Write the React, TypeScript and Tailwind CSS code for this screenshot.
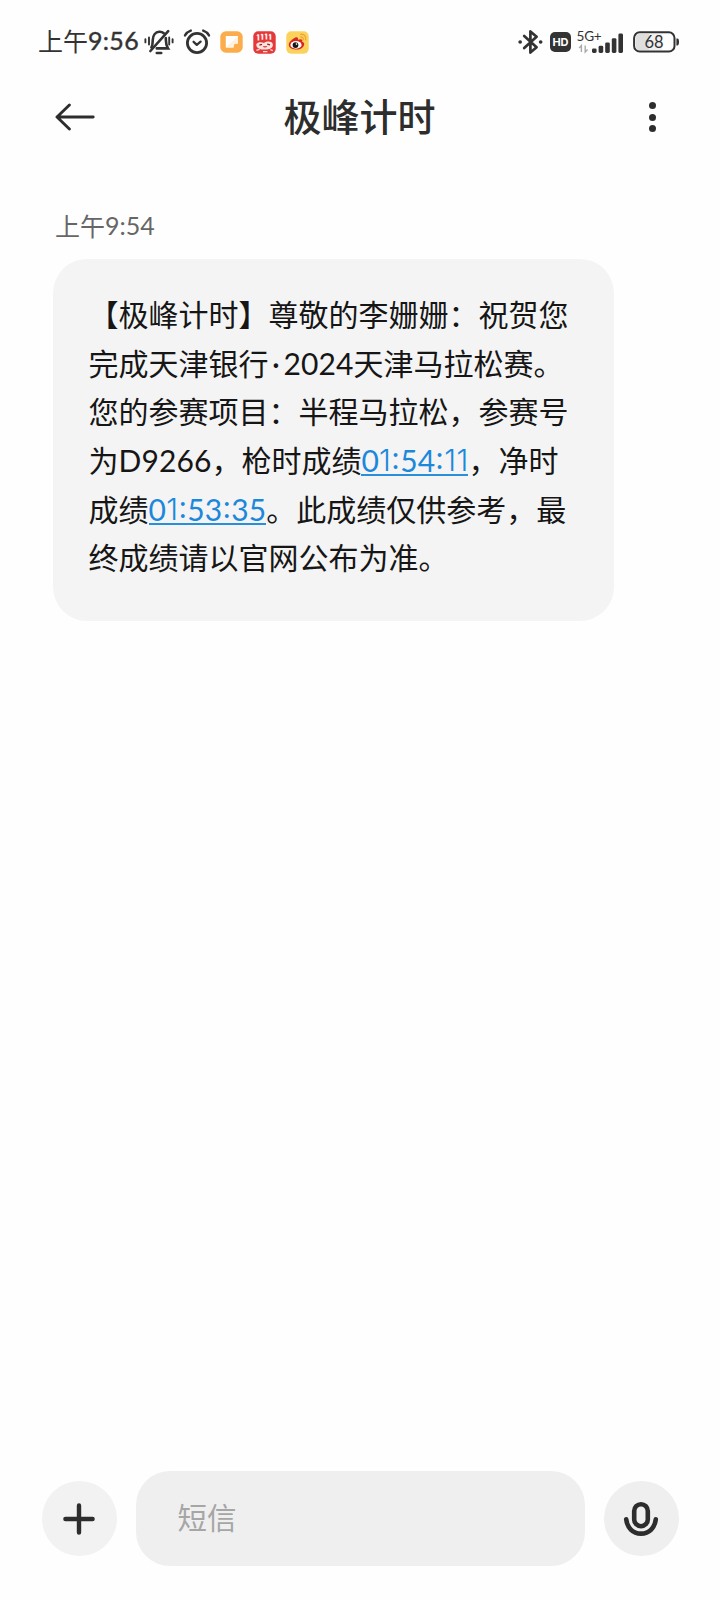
import type { ReactNode } from "react";

const cjk = "font-['Noto_Sans_CJK_SC',sans-serif]";
const latin = "font-['Lato','Noto_Sans_CJK_SC',sans-serif]";

const MutedBellIcon = () => (
    <svg width="30" height="26" viewBox="0 0 30 26" fill="none" stroke="#333" strokeWidth="2.6" strokeLinecap="round">
        <path d="M7.4 18.4C8.8 16.6 8.6 14.4 8.7 11.2C8.9 6.6 11.4 3 15.2 2.8C17 2.7 18.6 3.2 19.8 4.2" />
        <path d="M21.8 9C22 12.4 21.4 15.6 24 19.4H12.8" />
        <path d="M24.2 2.2L6.4 22" />
        <path d="M12.8 24H17.2" />
        <path d="M1.4 10.2V13.4M5 8.4V15.6M25.2 8.4V15.6M28.6 10.2V13.4" strokeWidth="1.9" />
    </svg>
);

const AlarmIcon = () => (
    <svg width="28" height="26" viewBox="0 0 28 26" fill="none" stroke="#333" strokeWidth="2.8" strokeLinecap="round" strokeLinejoin="round">
        <circle cx="14" cy="14" r="9.6" />
        <path d="M10.6 12.8L13.8 15.8L17.6 12.6" strokeWidth="2.3" />
        <path d="M2 6.4C3.4 4 5.4 2.4 7.8 1.6M26 6.4C24.6 4 22.6 2.4 20.2 1.6" strokeWidth="2.4" />
    </svg>
);

const NoteAppIcon = () => (
    <svg width="23" height="22" viewBox="0 0 23 22">
        <rect x="0.3" y="0.3" width="22.4" height="21.4" rx="5.5" fill="#fbad4b" />
        <path d="M5.8 5H18V12.4L14.4 12.8L13.4 16.6H5.8Z" fill="#fff" />
        <path d="M6 16.6L18 5V12.4L14.4 12.8L13.4 16.6Z" fill="#fff1dc" />
    </svg>
);

const SaleAppIcon = () => (
    <svg width="23" height="23" viewBox="0 0 23 23">
        <rect x="0.3" y="0.3" width="22.4" height="22.4" rx="5" fill="#e5383b" />
        <path d="M5.4 3.6V9.4M9.4 3V8.8M13.4 2.8V8.6M17.4 3.2V8.8" stroke="#ffe9e4" strokeWidth="1.7" />
        <path d="M3.8 4.8L5.4 3.6M7.8 4.2L9.4 3M11.8 4L13.4 2.8M15.8 4.4L17.4 3.2" stroke="#ffe9e4" strokeWidth="1.2" />
        <path d="M3.2 13.4C5 10.4 9 11.2 11 12C14 10 18.6 10 19.8 13C20.6 17 16.6 18.6 11.8 18.6C7 18.6 3.4 17.2 3.2 13.4Z" fill="#fbe3de" />
        <path d="M6.4 14.2L9 13.4M14.2 13.2L17 13.8" stroke="#8f2023" strokeWidth="1.3" />
        <path d="M9.6 15.2Q12 18 14.6 15.2Z" fill="#cf2228" />
        <path d="M3.4 19.4L6.6 18.4M10 20.6H14.4M17.4 18.6L19.8 19.6" stroke="#ffd9d4" strokeWidth="1.2" />
    </svg>
);

const WeiboAppIcon = () => (
    <svg width="23" height="23" viewBox="0 0 23 23">
        <rect x="0.3" y="0.3" width="22.4" height="22.4" rx="5" fill="#fbd35c" />
        <path d="M9 6.8C11 5.8 12.6 6.6 12 8.8C14.6 7.8 17 8.2 16.2 10.8C18.4 11.4 19 13.4 17.4 15.4C15.6 17.8 12.6 18.8 9.4 18.6C5.4 18.4 2.6 16.4 2.8 13.6C3 11.2 6.4 7.8 9 6.8Z" fill="#d9261f" />
        <ellipse cx="10" cy="13.9" rx="5.6" ry="3.8" fill="#fff" />
        <circle cx="9.5" cy="14.1" r="2.9" fill="#181818" />
        <circle cx="10.5" cy="13.1" r="0.8" fill="#fff" />
        <path d="M14.6 3.4C18 2.8 20.4 5.4 19.6 8.8M14.8 6C16.4 5.8 17.6 7 17.2 8.6" fill="none" stroke="#f0a53a" strokeWidth="1.4" strokeLinecap="round" />
    </svg>
);

const BluetoothIcon = () => (
    <svg width="25" height="26" viewBox="0 0 25 26" fill="none" stroke="#333" strokeWidth="2.7" strokeLinejoin="round" strokeLinecap="round">
        <path d="M6.2 7L18.6 18.2L12.4 23.6V2.4L18.6 7.8L6.2 19" />
        <path d="M2.1 13H2.2M22.6 13H22.7" strokeWidth="3.6" />
    </svg>
);

const SignalIcon = () => (
    <svg width="48" height="30" viewBox="-1 -3 48 30">
        <text x="-0.4" y="11.2" fontSize="13.6" fill="#333" fontFamily="Lato, sans-serif" textLength="25">5G+</text>
        <path d="M4.4 22V15.6L2.2 18M8.2 15.6V22L10.6 19.6" fill="none" stroke="#aaa" strokeWidth="1.4" />
        <g fill="#333">
            <rect x="15" y="18.4" width="4.6" height="4.6" rx="1.4" />
            <rect x="21.6" y="15.8" width="4.6" height="7.2" rx="1.4" />
            <rect x="28.2" y="12.4" width="4.6" height="10.6" rx="1.4" />
            <rect x="34.8" y="8.2" width="4.6" height="14.8" rx="1.4" />
            <rect x="41.4" y="3.6" width="4.6" height="19.4" rx="1.4" />
        </g>
    </svg>
);

const BatteryIcon = () => (
    <svg width="47" height="22" viewBox="0 0 47 22">
        <path d="M6.6 3H16V19H6.6Q3 19 3 15.4V6.6Q3 3 6.6 3Z" fill="#dedede" />
        <path d="M16 3H29V19H16Z" fill="#f0f0f0" />
        <rect x="1.1" y="1.3" width="40.4" height="19.2" rx="5.6" fill="none" stroke="#333" strokeWidth="2" />
        <path d="M43.4 7.6H44.4Q46 7.6 46 11Q46 14.4 44.4 14.4H43.4Z" fill="#333" />
        <text x="21" y="16.8" textAnchor="middle" fontSize="16.5" fill="#333" fontFamily="Lato, sans-serif">68</text>
    </svg>
);

const StatusBar = () => (
    <header className="flex h-[84px] items-center pl-[38px] pr-[40px] text-[#333]">
        <div className="flex w-[106px] items-center pb-[3px] text-[25px] leading-none">
            <span className={cjk}>上午</span>
            <span className={`${latin} mt-[-1px] tracking-[0.3px] [-webkit-text-stroke:0.4px_#333]`}>9:56</span>
        </div>
        <MutedBellIcon />
        <div className="ml-[9px]"><AlarmIcon /></div>
        <div className="ml-[9px] flex items-center gap-[10px]">
            <NoteAppIcon />
            <SaleAppIcon />
            <WeiboAppIcon />
        </div>
        <div className="ml-auto flex items-center">
            <BluetoothIcon />
            <div className="ml-[7px] mr-[5px] flex h-5 w-[21px] items-center justify-center rounded-[5px] bg-[#333] font-['Inter',sans-serif] text-[11px] font-bold leading-none text-white">HD</div>
            <SignalIcon />
            <div className="ml-[9px]"><BatteryIcon /></div>
        </div>
    </header>
);

const TitleBar = () => (
    <div className="flex h-[66px] items-center justify-between pl-[55px] pr-[63px]">
        <button aria-label="返回" className="w-10">
            <svg width="40" height="28" viewBox="0 0 40 28" fill="none" stroke="#2d2d2d" strokeWidth="2.9" strokeLinecap="round" strokeLinejoin="round">
                <path d="M38.2 14H2M14.4 2L2 14L14.4 26" />
            </svg>
        </button>
        <h1 className={`${cjk} ml-[-25px] pb-[4px] text-[38px] font-medium leading-none text-[#2d2d2d]`}>极峰计时</h1>
        <button aria-label="更多" className="flex w-2 flex-col items-center gap-[4.5px]">
            <i className="size-[7px] rounded-full bg-[#2d2d2d]" />
            <i className="size-[7px] rounded-full bg-[#2d2d2d]" />
            <i className="size-[7px] rounded-full bg-[#2d2d2d]" />
        </button>
    </div>
);

const Num = ({ children }: { children: ReactNode }) => (
    <span className={`${latin} tracking-[0.1px]`}>{children}</span>
);

// proportional digits: the "1" and the colon are narrower than the rest
const digitClass = (c: string) => {
    if (c === "1") return "w-[12.2px] font-['Inter',sans-serif] font-light";
    if (c === ":") return "w-[9px] -translate-y-[3px]";
    return "w-[17.5px]";
};

const TimeLink = ({ value }: { value: string }) => (
    <a className={`${latin} inline-flex h-[33px] border-b-2 border-[#2a8fdb] align-baseline leading-[34px] text-[#1c88dc]`}>
        {value.split("").map((c, i) => (
            <span key={i} className={`flex justify-center ${digitClass(c)}`}>{c}</span>
        ))}
    </a>
);

const Message = () => (
    <div className={`${cjk} ml-[53px] h-[362px] w-[561px] rounded-[34px] bg-[#f4f4f4] pl-[35.5px] pt-[30px] text-[30px] leading-[48.7px] text-[#161616]`}>
        <p className="h-[48.7px] whitespace-nowrap">【极峰计时】尊敬的李姗姗：祝贺您</p>
        <p className="h-[48.7px] whitespace-nowrap">完成天津银行<span className="inline-block w-[15px] text-center font-['Lato',sans-serif]">·</span><Num>2024</Num>天津马拉松赛。</p>
        <p className="h-[48.7px] whitespace-nowrap">您的参赛项目：半程马拉松，参赛号</p>
        <p className="h-[48.7px] whitespace-nowrap">为<Num>D9266</Num>，枪时成绩<TimeLink value="01:54:11" />，净时</p>
        <p className="h-[48.7px] whitespace-nowrap">成绩<TimeLink value="01:53:35" />。此成绩仅供参考，最</p>
        <p className="h-[48.7px] whitespace-nowrap">终成绩请以官网公布为准。</p>
    </div>
);

const Composer = () => (
    <footer className="mb-[34px] mt-auto flex items-center pl-[41.5px] pr-[41.5px]">
        <button aria-label="添加" className="flex size-[75px] items-center justify-center rounded-full bg-[#f2f2f2]">
            <svg width="32" height="32" viewBox="0 0 32 32" stroke="#2d2d2d" strokeWidth="4.4" strokeLinecap="round">
                <path d="M16 2.4V29.6M2.4 16H29.6" />
            </svg>
        </button>
        <div className={`${cjk} ml-[19px] mr-[19px] flex h-[95px] flex-1 items-center rounded-[34px] bg-[#efefef] pb-[3px] pl-[42px] text-[29.5px] leading-none text-[#a6a6a6]`}>短信</div>
        <button aria-label="语音" className="flex size-[75px] items-center justify-center rounded-full bg-[#efefef]">
            <svg width="36" height="36" viewBox="0 0 36 36" fill="none" stroke="#2d2d2d" strokeWidth="4.6" strokeLinecap="round">
                <rect x="11.2" y="3.2" width="13.6" height="22" rx="6.8" />
                <path d="M3.2 18.2C4.2 26.6 9.6 32.6 18 32.6C26.4 32.6 31.8 26.6 32.8 18.2" />
            </svg>
        </button>
    </footer>
);

export default function App() {
    return (
        <div className="flex h-[1600px] w-[720px] flex-col overflow-hidden bg-[#fefefe]">
            <StatusBar />
            <TitleBar />
            <main>
                <div className="flex h-[109px] items-center pl-[55px] pt-[41px] text-[25px] leading-none text-[#666]">
                    <span className={cjk}>上午</span>
                    <span className={latin}>9:54</span>
                </div>
                <Message />
            </main>
            <Composer />
        </div>
    );
}
